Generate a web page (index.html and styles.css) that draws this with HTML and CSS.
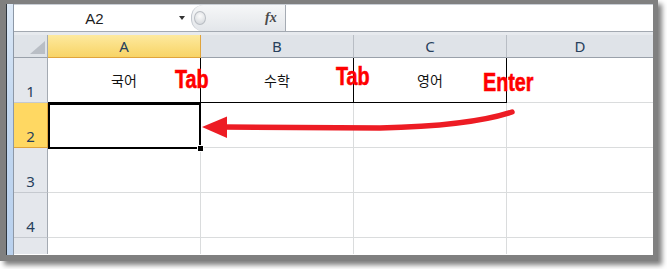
FILE: index.html
```html
<html>
  <head>
    <meta charset="utf-8">
    <title>엑셀 입력 순서</title>
    <link rel="stylesheet" href="styles.css">
  </head>
<body>

<div class="shot">
  <div class="window">
    <div class="edge"></div>
    <div class="main">

      <div class="formula-bar">
        <div class="name-box"><span class="name">A2</span><span class="drop"></span></div>
        <div class="splitter"><span class="knob"></span><span class="fx">fx</span></div>
        <div class="formula-input"></div>
      </div>
      <div class="bar-gap"></div>

      <div class="sheet">
        <div class="corner"></div>
        <div class="col-head active">A</div>
        <div class="col-head">B</div>
        <div class="col-head">C</div>
        <div class="col-head last">D</div>

        <div class="row-head">1</div>
        <div class="cell boxed">국어</div>
        <div class="cell boxed">수학</div>
        <div class="cell boxed">영어</div>
        <div class="cell last"></div>

        <div class="row-head active">2</div>
        <div class="cell"></div>
        <div class="cell"></div>
        <div class="cell"></div>
        <div class="cell last"></div>

        <div class="row-head">3</div>
        <div class="cell"></div>
        <div class="cell"></div>
        <div class="cell"></div>
        <div class="cell last"></div>

        <div class="row-head">4</div>
        <div class="cell"></div>
        <div class="cell"></div>
        <div class="cell"></div>
        <div class="cell last"></div>

        <div class="row-head end"></div>
        <div class="cell end"></div>
        <div class="cell end"></div>
        <div class="cell end"></div>
        <div class="cell end last"></div>
      </div>

    </div>
  </div>

  <!-- 선택된 셀 A2 -->
  <div class="selection"></div>
  <div class="fill-handle"></div>

  <!-- 주석: 화살표와 키 이름 -->
  <svg class="arrow" width="667" height="269" viewBox="0 0 667 269">
    <path d="M 224 127 L 380 128 Q 470 126 512 112" fill="none" stroke="#ed1c24" stroke-width="5.5" stroke-linecap="round"/>
    <polygon points="202,127 227,116.5 227,138" fill="#ed1c24"/>
  </svg>
  <span class="note tab1">Tab</span>
  <span class="note tab2">Tab</span>
  <span class="note enter">Enter</span>
</div>

</body></html>
```

FILE: styles.css
```css
body {
  margin: 0;
  background: #fff;
}

.shot {
  position: relative;
  width: 667px;
  height: 269px;
}

.window {
  display: flex;
  width: 658px;
  height: 261px;
  box-sizing: border-box;
  padding: 4px 5px 6px 6px;
  background: #808080;
  box-shadow: 4px 4px 5px rgba(0, 0, 0, 0.5);
}

.edge {
  width: 6px;
  border-left: 1px solid #2f3740;
  border-right: 1px solid #8d98a6;
  background: linear-gradient(#dde9f7, #c3d8f0 40%, #b9d1ee);
}

.main {
  display: flex;
  flex-direction: column;
  width: 639px;
  background: #fff;
}

/* 수식 입력줄 */
.formula-bar {
  display: flex;
  height: 28px;
  border-top: 1px solid #c9ced5;
  box-sizing: border-box;
  border-bottom: 1px solid #a3a9b1;
}

.name-box {
  display: flex;
  align-items: center;
  width: 177px;
  background: #fff;
  font-family: "Liberation Sans", sans-serif;
  font-size: 15px;
  color: #1d1d1d;
}

.name {
  width: 161px;
  text-align: center;
}

.drop {
  width: 0;
  height: 0;
  margin-left: 4px;
  border-left: 3px solid transparent;
  border-right: 3px solid transparent;
  border-top: 4px solid #333;
}

.splitter {
  display: flex;
  align-items: center;
  width: 93px;
  background: linear-gradient(#f6f7f8, #e3e6ea);
  border-left: 1px solid #c2c7ce;
  border-right: 1px solid #a5abb3;
  border-radius: 12px 0 0 12px;
}

.knob {
  width: 10px;
  height: 12px;
  margin-left: 2px;
  border-radius: 50%;
  border: 1px solid #b9bdc3;
  background: radial-gradient(circle at 50% 35%, #fbfbfb, #cfd3d8);
}

.fx {
  margin-left: 59px;
  font-family: "Liberation Serif", serif;
  font-style: italic;
  font-weight: bold;
  font-size: 14px;
  color: #4a4a4a;
}

.formula-input {
  flex: 1;
  background: #fff;
}

.bar-gap {
  height: 3px;
  background: #e7eaee;
}

/* 시트 */
.sheet {
  display: grid;
  grid-template-columns: 34px 153px 153px 153px 146px;
  grid-template-rows: 23px 45px 45px 45px 45px 16px;
}

.sheet > div {
  box-sizing: border-box;
}

.corner {
  position: relative;
  background: #dfe3e8;
  border-right: 1px solid #a4aab2;
  border-bottom: 1px solid #9aa1aa;
}

.corner::after {
  content: "";
  position: absolute;
  right: 2px;
  bottom: 3px;
  width: 15px;
  height: 13px;
  background: #b9bec5;
  clip-path: polygon(100% 0, 100% 100%, 0 100%);
}

.col-head {
  display: flex;
  align-items: center;
  justify-content: center;
  background: #dfe3e8;
  border-right: 1px solid #b8bdc4;
  border-bottom: 1px solid #9aa1aa;
  font-family: "Noto Sans", sans-serif;
  font-size: 15px;
  color: #27405c;
}

.col-head.active {
  background: linear-gradient(#fde99e, #f8d466);
  border-right-color: #e0a43c;
  border-bottom-color: #e0a43c;
}

.col-head.last {
  border-right: none;
}

.row-head {
  display: flex;
  align-items: flex-end;
  justify-content: center;
  padding-bottom: 1px;
  background: #e4e7ec;
  border-right: 1px solid #a4aab2;
  border-bottom: 1px solid #c5c9cf;
  font-family: "Noto Sans", sans-serif;
  font-size: 15px;
  line-height: 20px;
  color: #27405c;
}

.row-head.active {
  background: #ffd862;
  border-right-color: #e0a43c;
  border-bottom-color: #e0a43c;
}

.cell {
  display: flex;
  align-items: center;
  justify-content: center;
  border-right: 1px solid #dadcdd;
  border-bottom: 1px solid #dadcdd;
  font-family: "Noto Sans CJK KR", sans-serif;
  font-size: 14px;
  line-height: 16px;
  color: #111;
}

.cell.boxed {
  border-right-color: #000;
  border-bottom-color: #000;
}

.cell.last {
  border-right: none;
}

.sheet .end {
  border-bottom: none;
}

/* 선택 셀 */
.selection {
  position: absolute;
  left: 48px;
  top: 103px;
  width: 153px;
  height: 46px;
  box-sizing: border-box;
  border: 2px solid #000;
}

.fill-handle {
  position: absolute;
  left: 197px;
  top: 145px;
  width: 7px;
  height: 7px;
  box-sizing: border-box;
  background: #000;
  border: 1px solid #fff;
}

.arrow {
  position: absolute;
  left: 0;
  top: 0;
}

.note {
  position: absolute;
  font-family: "Liberation Sans", sans-serif;
  font-weight: bold;
  font-size: 25px;
  line-height: 25px;
  color: #ff0000;
  transform: scaleX(0.79);
  transform-origin: left top;
  -webkit-text-stroke: 0.6px #ff0000;
}

.tab1 {
  left: 175px;
  top: 67px;
}

.tab2 {
  left: 336px;
  top: 64px;
}

.enter {
  left: 483px;
  top: 70px;
}
```
